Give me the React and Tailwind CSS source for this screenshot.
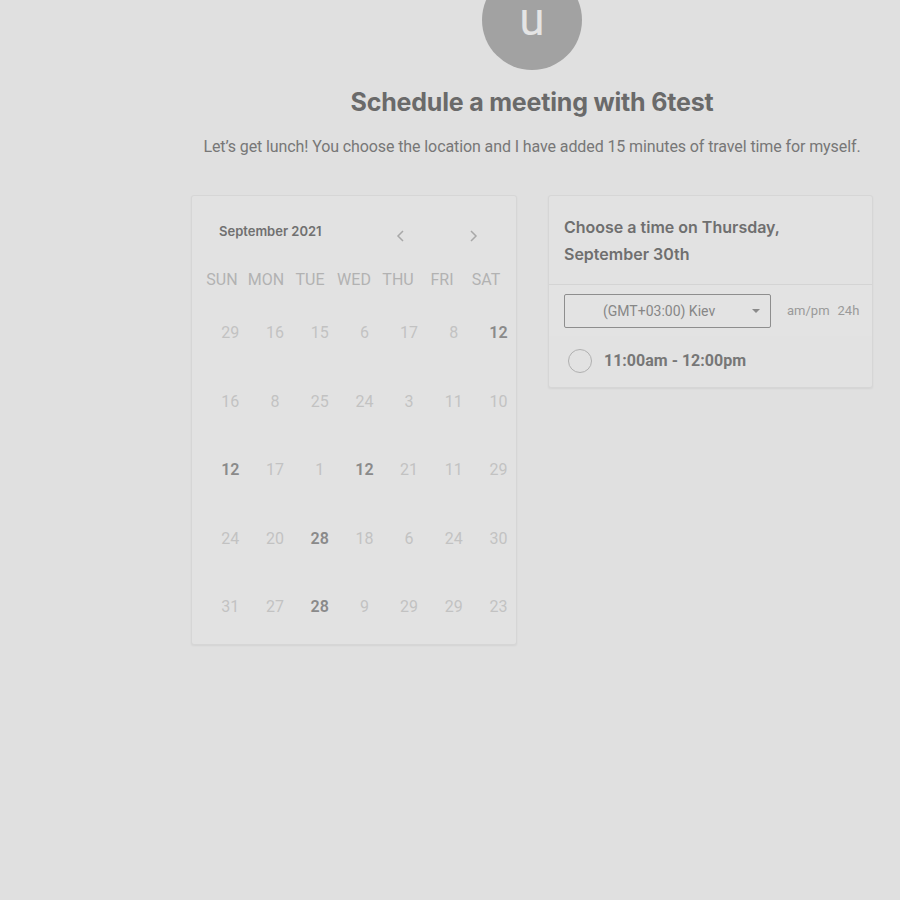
import React from "react";

const rows = [
  [["29"], ["16"], ["15"], ["6"], ["17"], ["8"], ["12", 1]],
  [["16"], ["8"], ["25"], ["24"], ["3"], ["11"], ["10"]],
  [["12", 1], ["17"], ["1"], ["12", 1], ["21"], ["11"], ["29"]],
  [["24"], ["20"], ["28", 1], ["18"], ["6"], ["24"], ["30"]],
  [["31"], ["27"], ["28", 1], ["9"], ["29"], ["29"], ["23"]],
];

const heads = ["SUN", "MON", "TUE", "WED", "THU", "FRI", "SAT"];

export default function App() {
  return (
    <div className="min-h-[900px] w-full bg-[#e0e0e0] overflow-hidden" style={{ fontFamily: "Roboto, 'Liberation Sans', sans-serif" }}>
      <div className="pl-[164px] flex flex-col items-center">
        <div className="mt-[-30px] w-[100px] h-[100px] rounded-full bg-[#a2a2a2] flex items-center justify-center">
          <span className="text-[#e4e4e4] text-[46px] leading-none mt-[-2px]" style={{ fontFamily: "Roboto, sans-serif" }}>u</span>
        </div>
        <h1 className="mt-[17px] text-[25px] leading-[31px] font-bold text-[#6a6a6a] tracking-[-0.2px]" style={{ fontFamily: "Inter, 'Liberation Sans', sans-serif" }}>
          Schedule a meeting with 6test
        </h1>
        <p className="mt-[19px] text-[16px] leading-[20px] text-[#777777] tracking-[-0.1px]">
          Let’s get lunch! You choose the location and I have added 15 minutes of travel time for myself.
        </p>
        <div className="mt-[38px] flex gap-[31px] items-start">
          {/* calendar */}
          <div className="w-[326px] h-[450px] bg-[#e2e2e2] border border-[#d6d6d6] rounded-[3px] shadow-[0_1px_2px_rgba(0,0,0,0.06)]">
            <div className="flex items-center h-[40px] mt-[16px] pl-[27px] pr-[36px]">
              <span className="text-[13px] font-semibold text-[#707070]" style={{ fontFamily: "Inter, sans-serif" }}>September 2021</span>
              <span className="ml-auto flex gap-[58px] text-[#a8a8a8] mt-[8px]">
                <svg width="14" height="14" viewBox="0 0 14 14" fill="none" stroke="currentColor" strokeWidth="1.5"><path d="M9 2 L4 7 L9 12" /></svg>
                <svg width="14" height="14" viewBox="0 0 14 14" fill="none" stroke="currentColor" strokeWidth="1.5"><path d="M5 2 L10 7 L5 12" /></svg>
              </span>
            </div>
            <div className="px-[8px] grid grid-cols-7 mt-[18px]">
              {heads.map((h) => (
                <div key={h} className="text-center text-[16px] leading-[20px] text-[#b2b2b2]">{h}</div>
              ))}
            </div>
            <div className="mt-[33px] flex flex-col gap-[48.5px]">
              {rows.map((r, i) => (
                <div key={i} className="grid grid-cols-[repeat(7,44.7px)] pl-[16px]">
                  {r.map(([n, b], j) => (
                    <div key={j} className={"text-center text-[16px] leading-[20px] " + (b ? "font-semibold text-[#8a8a8a]" : "text-[#c2c2c2]")}>{n}</div>
                  ))}
                </div>
              ))}
            </div>
          </div>
          {/* times */}
          <div className="w-[325px] bg-[#e2e2e2] border border-[#d6d6d6] rounded-[3px] shadow-[0_1px_2px_rgba(0,0,0,0.06)]">
            <div className="px-[15px] pt-[18px] pb-[16px] border-b border-[#d4d4d4] text-[16px] leading-[27px] font-semibold text-[#6f6f6f]" style={{ fontFamily: "Inter, sans-serif" }}>
              Choose a time on Thursday,<br />September 30th
            </div>
            <div className="px-[15px] pt-[9px] pb-[8px] flex items-center bg-[#e3e3e3]">
              <div className="w-[207px] shrink-0 h-[34px] border border-[#8e8e8e] rounded-[2px] flex items-center pl-[38px] pr-[10px]">
                <span className="text-[14px] text-[#878787]">(GMT+03:00) Kiev</span>
                <svg className="ml-auto" width="8" height="5" viewBox="0 0 8 5"><path d="M0 0 L8 0 L4 4 Z" fill="#8a8a8a" /></svg>
              </div>
              <span className="ml-[16px] text-[13px] text-[#9a9a9a]">am/pm</span>
              <span className="ml-[8px] text-[13px] text-[#9a9a9a]">24h</span>
            </div>
            <div className="px-[19px] pt-[13px] pb-[14px] flex items-center">
              <div className="w-[24px] h-[24px] rounded-full border-[1.5px] border-[#b0b0b0]"></div>
              <span className="ml-[12px] text-[16px] font-bold text-[#777777]">11:00am - 12:00pm</span>
            </div>
          </div>
        </div>
      </div>
    </div>
  );
}
